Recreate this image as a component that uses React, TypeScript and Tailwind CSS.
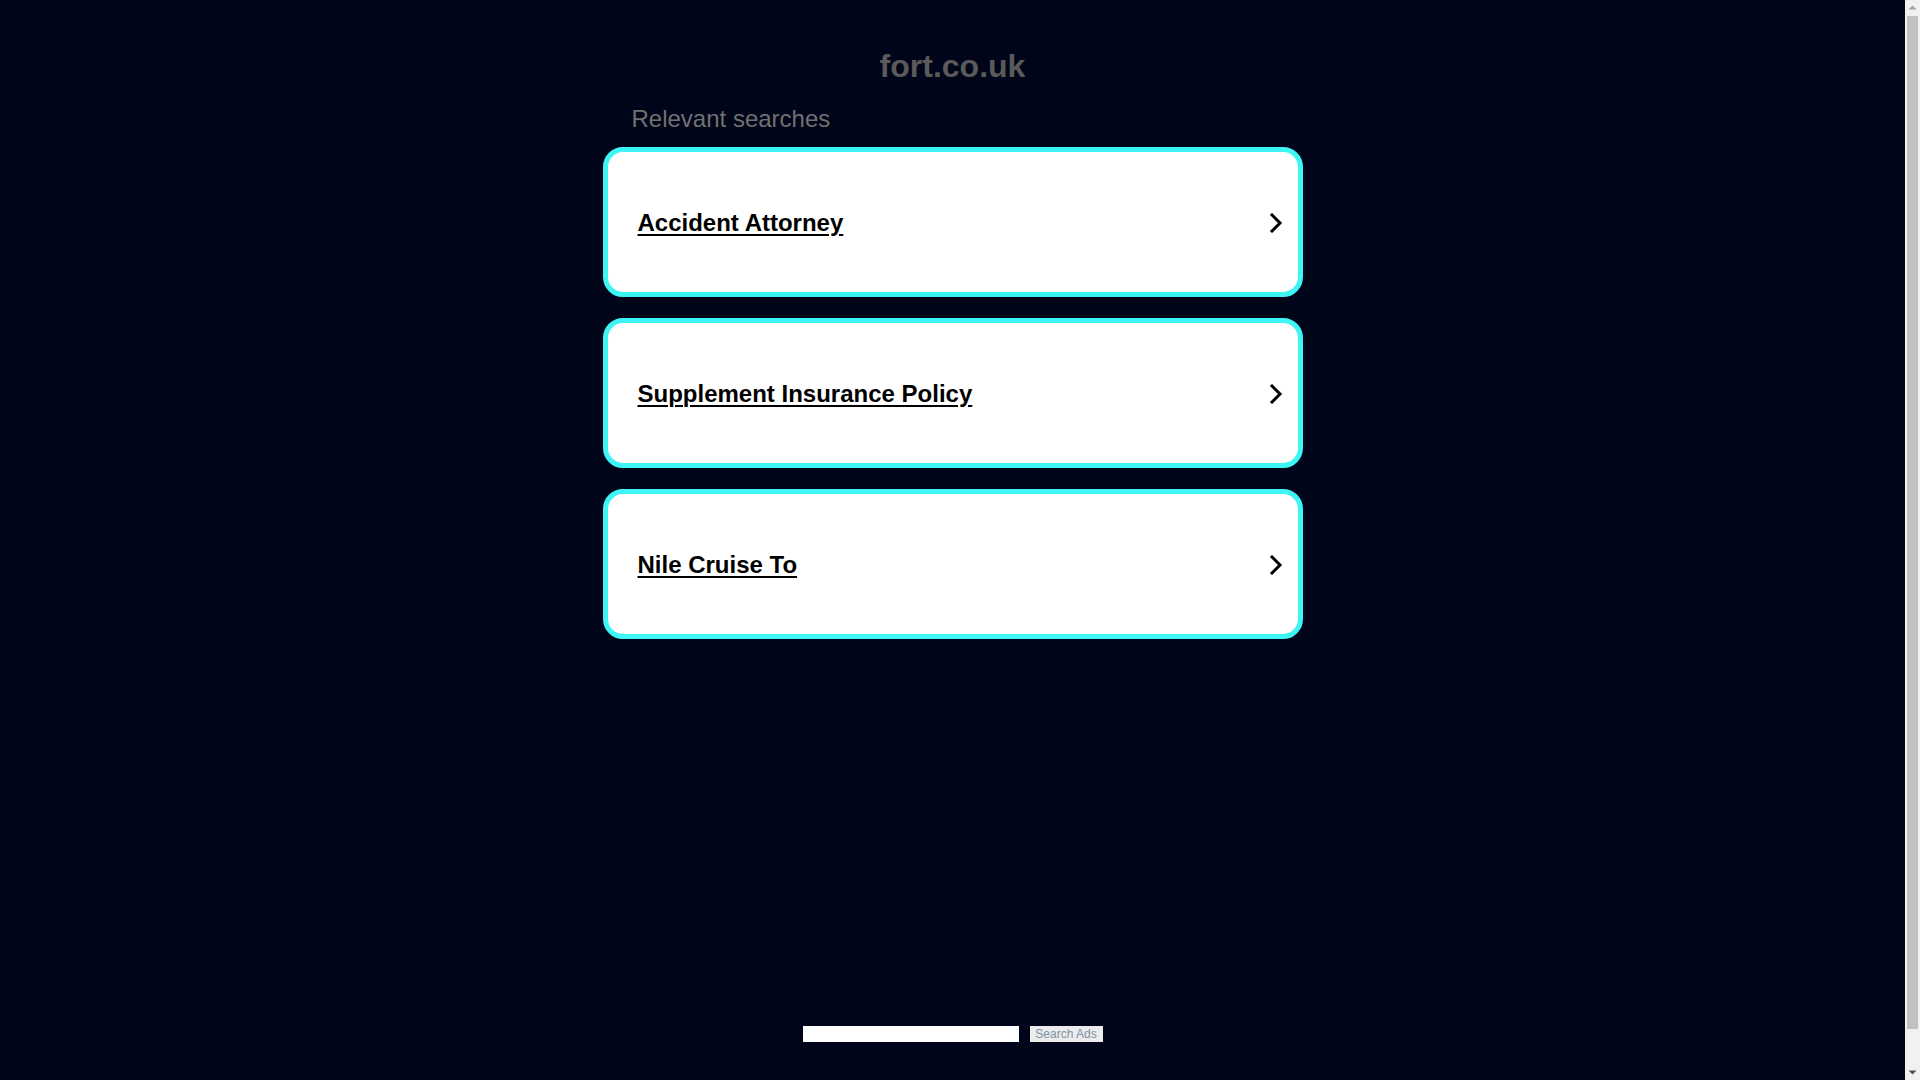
import React from "react";

const items = ["Accident Attorney", "Supplement Insurance Policy", "Nile Cruise To"];

function Chevron() {
  return (
    <svg width="14" height="20" viewBox="0 0 14 20" className="shrink-0 mt-[2px]">
      <polyline points="3,2 11,10 3,18" fill="none" stroke="#000" strokeWidth="3" strokeLinecap="square" strokeLinejoin="miter" />
    </svg>
  );
}

export default function App() {
  return (
    <div className="h-[1080px] flex bg-[#000519] font-['Liberation_Sans',Arial,sans-serif] overflow-hidden">
      <div className="flex-1 flex flex-col">
        <div className="w-[700px] mx-auto pt-[48px]">
          <h1 className="text-[32px] leading-[36px] font-bold text-center text-[#5a5a5a]">fort.co.uk</h1>
          <div className="mt-[21px] pl-[29px] text-[24px] leading-[28px] text-[#717171]">Relevant searches</div>
          <div className="mt-[14px] flex flex-col gap-[21px]">
            {items.map((t) => (
              <a
                key={t}
                href="#"
                className="h-[150px] flex items-center justify-between bg-white border-[5px] border-[#3df5f5] rounded-[20px] pl-[30px] pr-[15px]"
              >
                <span className="mt-[2px] text-[24px] leading-[28px] font-bold text-black underline underline-offset-[3px] decoration-2">{t}</span>
                <Chevron />
              </a>
            ))}
          </div>
        </div>
        <div className="mt-[387px] flex justify-center items-center gap-[11px]">
          <input type="text" className="w-[216px] h-[16px] bg-white border-0 outline-none p-0" />
          <button className="w-[73px] h-[16px] bg-[#ececec] text-[#7d91a5] text-[12px] leading-[16px] p-0 border-0">Search Ads</button>
        </div>
      </div>
      <div className="w-[15px] shrink-0 bg-[#f1f1f1] flex flex-col items-center">
        <svg width="15" height="15" viewBox="0 0 15 15" className="shrink-0">
          <polygon points="3.5,9.5 7.5,5.5 11.5,9.5" fill="#a3a3a3" />
        </svg>
        <div className="w-[11px] flex-1 mt-[1px] mb-[36px] bg-[#c1c1c1]" />
        <svg width="15" height="15" viewBox="0 0 15 15" className="shrink-0">
          <polygon points="3.5,5.5 7.5,9.5 11.5,5.5" fill="#505050" />
        </svg>
      </div>
    </div>
  );
}
